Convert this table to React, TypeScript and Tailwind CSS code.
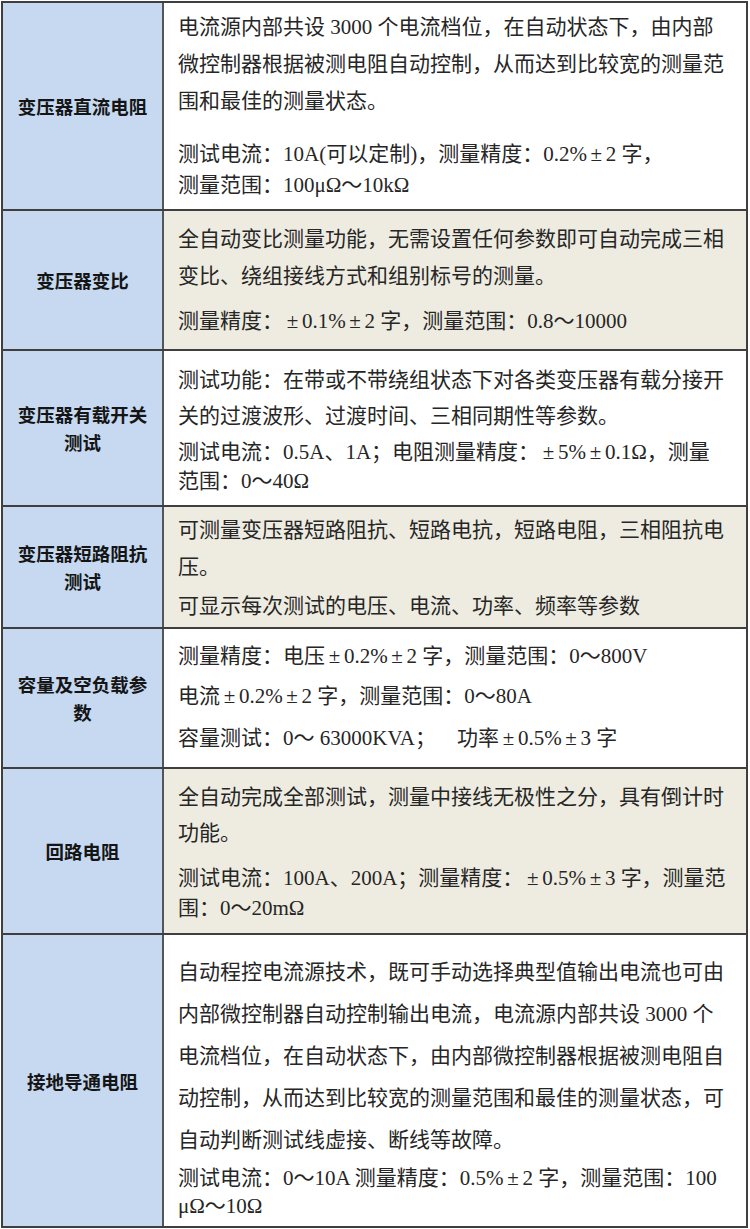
import React from "react";

type Para = { lines: string[]; lh: number; mt?: number };
type Row = { label: string; h: number; pt: number; beige: boolean; paras: Para[] };

const rows: Row[] = [
  {
    label: "变压器直流电阻",
    h: 206,
    pt: 6,
    beige: false,
    paras: [
      {
        lines: [
          "电流源内部共设 3000 个电流档位，在自动状态下，由内部",
          "微控制器根据被测电阻自动控制，从而达到比较宽的测量范",
          "围和最佳的测量状态。",
        ],
        lh: 37,
      },
      {
        lines: ["测试电流：10A(可以定制)，测量精度：0.2%±2 字，", "测量范围：100μΩ～10kΩ"],
        lh: 31,
        mt: 19,
      },
    ],
  },
  {
    label: "变压器变比",
    h: 140,
    pt: 10,
    beige: true,
    paras: [
      {
        lines: ["全自动变比测量功能，无需设置任何参数即可自动完成三相", "变比、绕组接线方式和组别标号的测量。"],
        lh: 37,
      },
      { lines: ["测量精度：±0.1%±2 字，测量范围：0.8～10000"], lh: 37, mt: 8 },
    ],
  },
  {
    label: "变压器有载开关测试",
    h: 156,
    pt: 11,
    beige: false,
    paras: [
      {
        lines: ["测试功能：在带或不带绕组状态下对各类变压器有载分接开", "关的过渡波形、过渡时间、三相同期性等参数。"],
        lh: 36,
      },
      { lines: ["测试电流：0.5A、1A；电阻测量精度：±5%±0.1Ω，测量", "范围：0～40Ω"], lh: 29, mt: 4 },
    ],
  },
  {
    label: "变压器短路阻抗测试",
    h: 122,
    pt: 5,
    beige: true,
    paras: [
      { lines: ["可测量变压器短路阻抗、短路电抗，短路电阻，三相阻抗电", "压。"], lh: 37 },
      { lines: ["可显示每次测试的电压、电流、功率、频率等参数"], lh: 37, mt: 2 },
    ],
  },
  {
    label: "容量及空负载参数",
    h: 140,
    pt: 9,
    beige: false,
    paras: [
      { lines: ["测量精度：电压±0.2%±2 字，测量范围：0～800V"], lh: 37 },
      { lines: ["电流±0.2%±2 字，测量范围：0～80A"], lh: 37, mt: 3 },
      { lines: ["容量测试：0～ 63000KVA；\u00a0\u00a0\u00a0\u00a0功率±0.5%±3 字"], lh: 37, mt: 5 },
    ],
  },
  {
    label: "回路电阻",
    h: 166,
    pt: 10,
    beige: true,
    paras: [
      { lines: ["全自动完成全部测试，测量中接线无极性之分，具有倒计时", "功能。"], lh: 36 },
      { lines: ["测试电流：100A、200A；测量精度：±0.5%±3 字，测量范", "围：0～20mΩ"], lh: 30, mt: 12 },
    ],
  },
  {
    label: "接地导通电阻",
    h: 293,
    pt: 16,
    beige: false,
    paras: [
      {
        lines: [
          "自动程控电流源技术，既可手动选择典型值输出电流也可由",
          "内部微控制器自动控制输出电流，电流源内部共设 3000 个",
          "电流档位，在自动状态下，由内部微控制器根据被测电阻自",
          "动控制，从而达到比较宽的测量范围和最佳的测量状态，可",
          "自动判断测试线虚接、断线等故障。",
        ],
        lh: 42,
      },
      { lines: ["测试电流：0～10A 测量精度：0.5%±2 字，测量范围：100", "μΩ～10Ω"], lh: 28, mt: 3 },
    ],
  },
];

function Line({ text }: { text: string }) {
  const parts = text.split("±");
  return (
    <div className="whitespace-nowrap">
      {parts.map((p, i) => (
        <React.Fragment key={i}>
          {i > 0 && <span className="inline-block w-[0.9em] text-center">±</span>}
          {p}
        </React.Fragment>
      ))}
    </div>
  );
}

export default function App() {
  return (
    <div className="min-h-[1229px] w-[750px] bg-white pt-[1px]">
      <div className="ml-[1px] flex w-[747px] flex-col border-2 border-[#3f3f3f]">
        {rows.map((r, i) => (
          <div
            key={i}
            className={`flex ${i > 0 ? "border-t-2 border-[#3f3f3f]" : ""}`}
            style={{ height: r.h }}
          >
            <div className="flex w-[161px] shrink-0 items-center justify-center border-r-2 border-[#555555] bg-[#c6d9f1] px-[10px] text-center text-[18.5px] font-bold leading-[28px] text-[#151515] [font-family:'Noto_Sans_CJK_SC',sans-serif]">
              {r.label}
            </div>
            <div
              className={`flex-1 pl-[14px] text-[21px] text-[#262626] [font-family:'Liberation_Serif','Noto_Sans_CJK_SC',serif] ${
                r.beige ? "bg-[#eeece1]" : "bg-white"
              }`}
              style={{ paddingTop: r.pt }}
            >
              {r.paras.map((p, j) => (
                <div key={j} style={{ lineHeight: `${p.lh}px`, marginTop: p.mt ?? 0 }}>
                  {p.lines.map((l, k) => (
                    <Line key={k} text={l} />
                  ))}
                </div>
              ))}
            </div>
          </div>
        ))}
      </div>
    </div>
  );
}
